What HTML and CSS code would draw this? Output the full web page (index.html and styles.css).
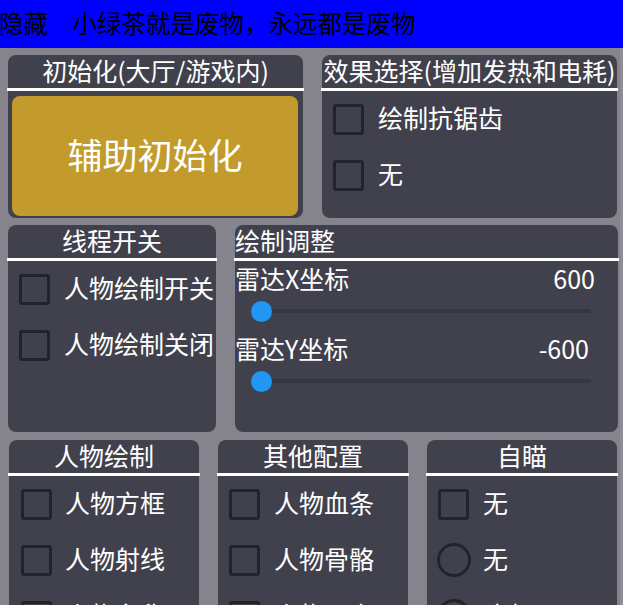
FILE: index.html
```html
<!DOCTYPE html>
<html lang="zh-CN">
<head>
<meta charset="utf-8">
<title>菜单</title>
<link rel="stylesheet" href="styles.css">
</head>
<body>
<div class="topbar">隐藏　小绿茶就是废物，永远都是废物</div>
<div class="shell">
  <main class="content">
    <div class="row row1">
      <section class="panel">
        <div class="ptitle center">初始化(大厅/游戏内)</div>
        <div class="rule"></div>
        <div class="btnwrap"><button class="initbtn">辅助初始化</button></div>
      </section>
      <section class="panel">
        <div class="ptitle center">效果选择(增加发热和电耗)</div>
        <div class="rule"></div>
        <div class="opt"><span class="box"></span><span class="txt">绘制抗锯齿</span></div>
        <div class="opt"><span class="box"></span><span class="txt">无</span></div>
      </section>
    </div>
    <div class="row row2">
      <section class="panel">
        <div class="ptitle center">线程开关</div>
        <div class="rule"></div>
        <div class="opt"><span class="box"></span><span class="txt">人物绘制开关</span></div>
        <div class="opt"><span class="box"></span><span class="txt">人物绘制关闭</span></div>
      </section>
      <section class="panel">
        <div class="ptitle">绘制调整</div>
        <div class="rule"></div>
        <div class="field">
          <div class="fhead"><span>雷达X坐标</span><span>600</span></div>
          <div class="slider"><span class="thumb"></span><span class="track"></span></div>
        </div>
        <div class="field">
          <div class="fhead neg"><span>雷达Y坐标</span><span>-600</span></div>
          <div class="slider"><span class="thumb"></span><span class="track"></span></div>
        </div>
      </section>
    </div>
    <div class="row row3">
      <section class="panel">
        <div class="ptitle center">人物绘制</div>
        <div class="rule"></div>
        <div class="opt wide"><span class="box"></span><span class="txt">人物方框</span></div>
        <div class="opt wide"><span class="box"></span><span class="txt">人物射线</span></div>
        <div class="opt wide"><span class="box"></span><span class="txt">人物名称</span></div>
      </section>
      <section class="panel">
        <div class="ptitle center">其他配置</div>
        <div class="rule"></div>
        <div class="opt"><span class="box"></span><span class="txt">人物血条</span></div>
        <div class="opt"><span class="box"></span><span class="txt">人物骨骼</span></div>
        <div class="opt"><span class="box"></span><span class="txt">人物距离</span></div>
      </section>
      <section class="panel">
        <div class="ptitle center">自瞄</div>
        <div class="rule"></div>
        <div class="opt"><span class="box"></span><span class="txt">无</span></div>
        <div class="opt"><span class="radio"></span><span class="txt">无</span></div>
        <div class="opt"><span class="radio"></span><span class="txt">头部</span></div>
      </section>
    </div>
  </main>
  <div class="scroll"></div>
</div>
</body>
</html>
```
FILE: styles.css
```css
* { box-sizing: border-box; }
html, body { margin: 0; padding: 0; }
body {
  width: 623px;
  height: 605px;
  overflow: hidden;
  background: #85848c;
  font-family: "Noto Sans CJK SC", "Noto Sans", sans-serif;
  color: #fff;
}
.topbar {
  height: 48px;
  background: #0000ff;
  color: #000;
  font-size: 24.5px;
  line-height: 46px;
  white-space: nowrap;
  overflow: hidden;
  text-indent: -1px;
}
.shell { display: flex; height: 557px; }
.content { flex: 1; padding-top: 7px; overflow: hidden; }
.scroll { width: 3px; background: #8e8d95; }
.row { display: grid; column-gap: 19px; }
.row1 { grid-template-columns: 295px 295px; padding-left: 8px; }
.row2 { grid-template-columns: 208px 383px; padding-left: 8px; margin-top: 7px; height: 207px; }
.row3 { grid-template-columns: 190px 190px 190px; padding-left: 9px; margin-top: 8px; }
.panel { background: #41414d; border-radius: 8px; padding-bottom: 12px; }
.row1 .panel { padding-bottom: 0; }
.ptitle {
  height: 33px;
  line-height: 30px;
  font-size: 25px;
  white-space: nowrap;
}
.center { text-align: center; }
.rule { height: 3px; background: #fff; margin: 0 -1px; }
.btnwrap { padding: 5px 5px 2px 4px; }
.initbtn {
  display: block;
  width: 100%;
  height: 120px;
  border: 0;
  border-radius: 8px;
  background: #c29b2c;
  color: #fff;
  font-family: inherit;
  font-size: 35px;
  padding: 0 0 5px;
}
.opt {
  display: flex;
  align-items: center;
  height: 56px;
  padding-left: 11px;
  font-size: 25px;
  white-space: nowrap;
}
.txt { margin-bottom: 4px; }
.opt.wide { padding-left: 12px; }
.box {
  flex: none;
  width: 31px;
  height: 31px;
  border: 3px solid #23232a;
  border-radius: 3px;
  margin-right: 14px;
}
.wide .box { margin-right: 13px; }
.radio {
  flex: none;
  width: 34px;
  height: 34px;
  border: 3px solid #23232a;
  border-radius: 50%;
  margin-left: -1px;
  margin-right: 12px;
}
.field { height: 70px; }
.fhead {
  display: flex;
  justify-content: space-between;
  height: 38px;
  line-height: 34px;
  font-size: 25px;
  padding-right: 23px;
}
.fhead.neg { padding-right: 29px; }
.slider {
  display: flex;
  align-items: center;
  height: 24px;
  margin: 0 27px 0 16px;
}
.thumb {
  flex: none;
  position: relative;
  z-index: 1;
  width: 21px;
  height: 21px;
  border-radius: 50%;
  background: #2196f3;
}
.track {
  flex: 1;
  height: 4px;
  margin-left: -10px;
  background: #373742;
}
```
